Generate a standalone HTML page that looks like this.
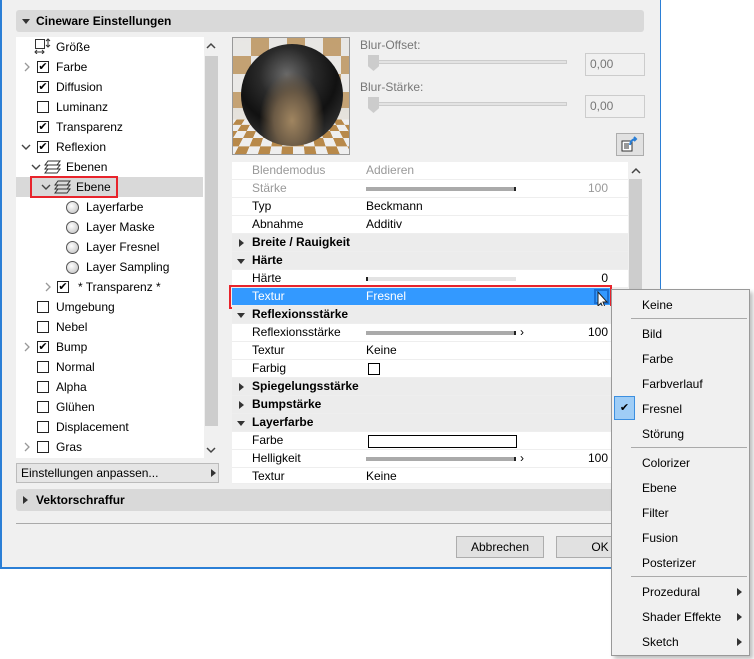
<!DOCTYPE html>
<html><head><style>
*{margin:0;padding:0;box-sizing:border-box}
body{width:754px;height:659px;background:#fff;font-family:"Liberation Sans",sans-serif;font-size:12px;color:#000;position:relative;overflow:hidden}
.a{position:absolute}
.dlg{left:0;top:0;width:661px;height:569px;background:#f0f0f0;border-left:2px solid #2b7fd6;border-right:1px solid #2b7fd6;border-bottom:2px solid #2b7fd6}
.hdr{background:#d9d9d9;border-radius:3px;font-weight:bold}
.tri{display:inline-block;width:0;height:0;border-left:4px solid transparent;border-right:4px solid transparent;border-top:5px solid #333}
.trr{display:inline-block;width:0;height:0;border-top:4px solid transparent;border-bottom:4px solid transparent;border-left:5px solid #333}
.row{position:absolute;height:20px;line-height:20px}
.cb{position:absolute;width:12px;height:12px;border:1px solid #222;background:#fff;top:4px;font-size:11px;line-height:10px;text-align:center}
.rad{position:absolute;width:13px;height:13px;border-radius:50%;border:1px solid #555;background:radial-gradient(circle at 40% 35%,#fff,#bbb);top:4px}
.pr{position:absolute;left:232px;width:396px;height:18px;line-height:17px;background:#fff;border-bottom:1px solid #eee}
.pr .l{position:absolute;left:20px}
.pr .v{position:absolute;left:134px}
.pg{background:#ececec;font-weight:bold}
.bar{position:absolute;left:134px;top:7px;width:150px;height:4px;background:#aaa;border-right:2px solid #222}
.num{position:absolute;right:20px}
.mi{position:absolute;left:642px;height:20px;line-height:20px}
.sep{position:absolute;left:631px;width:116px;height:1px;background:#aaa}
.btn{background:#e1e1e1;border:1px solid #adadad;text-align:center;line-height:20px}
svg.c{position:absolute}
</style></head><body>
<div class="a dlg"></div>
<div class="a hdr" style="left:16px;top:10px;width:628px;height:22px;line-height:22px;padding-left:20px"><span class="tri a" style="left:6px;top:9px"></span>Cineware Einstellungen</div>
<!-- left tree -->
<div class="a" style="left:16px;top:37px;width:188px;height:421px;background:#fff"></div>
<div class="a" style="left:204px;top:37px;width:15px;height:421px;background:#f0f0f0"></div>
<div class="a" style="left:205px;top:56px;width:13px;height:370px;background:#cdcdcd"></div>
<svg class="c" style="left:206px;top:42px" width="10" height="8"><path d="M1 6l4-4 4 4" stroke="#444" stroke-width="1.5" fill="none"/></svg>
<svg class="c" style="left:206px;top:446px" width="10" height="8"><path d="M1 2l4 4 4-4" stroke="#444" stroke-width="1.5" fill="none"/></svg>
<div class="a" style="left:16px;top:177px;width:187px;height:20px;background:#d9d9d9"></div>
<div class="a" style="left:30px;top:176px;width:88px;height:22px;border:2px solid #e8242c"></div>
<div class="row" style="top:37px;left:56px">Größe</div>
<svg class="c" style="left:34px;top:38px" width="18" height="16"><rect x="1.5" y="1.5" width="9" height="9" fill="none" stroke="#333"/><path d="M14 1v8M12 3l2-2 2 2M12 7l2 2 2-2M1 14h9M3 12l-2 2 2 2M8 12l2 2-2 2" stroke="#333" fill="none"/></svg>
<svg class="c" style="left:23px;top:62px" width="8" height="10"><path d="M2 1l4 4-4 4" stroke="#999" stroke-width="1.3" fill="none"/></svg>
<div class="cb" style="left:37px;top:61px">&#10004;</div><div class="row" style="top:57px;left:56px">Farbe</div>
<div class="cb" style="left:37px;top:81px">&#10004;</div><div class="row" style="top:77px;left:56px">Diffusion</div>
<div class="cb" style="left:37px;top:101px"></div><div class="row" style="top:97px;left:56px">Luminanz</div>
<div class="cb" style="left:37px;top:121px">&#10004;</div><div class="row" style="top:117px;left:56px">Transparenz</div>
<svg class="c" style="left:21px;top:143px" width="10" height="8"><path d="M1 2l4 4 4-4" stroke="#444" stroke-width="1.4" fill="none"/></svg>
<div class="cb" style="left:37px;top:141px">&#10004;</div><div class="row" style="top:137px;left:56px">Reflexion</div>
<svg class="c" style="left:31px;top:163px" width="10" height="8"><path d="M1 2l4 4 4-4" stroke="#444" stroke-width="1.4" fill="none"/></svg>
<svg class="c" style="left:44px;top:159px" width="18" height="16"><path d="M4 2h12l-3 4H1zM4 6h12l-3 4H1zM4 10h12l-3 4H1z" stroke="#333" fill="#fff"/></svg>
<div class="row" style="top:157px;left:66px">Ebenen</div>
<svg class="c" style="left:41px;top:183px" width="10" height="8"><path d="M1 2l4 4 4-4" stroke="#444" stroke-width="1.4" fill="none"/></svg>
<svg class="c" style="left:54px;top:179px" width="18" height="16"><path d="M4 2h12l-3 4H1zM4 6h12l-3 4H1zM4 10h12l-3 4H1z" stroke="#333" fill="#d9d9d9"/></svg>
<div class="row" style="top:177px;left:76px">Ebene</div>
<div class="rad" style="left:66px;top:201px"></div><div class="row" style="top:197px;left:86px">Layerfarbe</div>
<div class="rad" style="left:66px;top:221px"></div><div class="row" style="top:217px;left:86px">Layer Maske</div>
<div class="rad" style="left:66px;top:241px"></div><div class="row" style="top:237px;left:86px">Layer Fresnel</div>
<div class="rad" style="left:66px;top:261px"></div><div class="row" style="top:257px;left:86px">Layer Sampling</div>
<svg class="c" style="left:44px;top:282px" width="8" height="10"><path d="M2 1l4 4-4 4" stroke="#999" stroke-width="1.3" fill="none"/></svg>
<div class="cb" style="left:57px;top:281px">&#10004;</div><div class="row" style="top:277px;left:78px">* Transparenz *</div>
<div class="cb" style="left:37px;top:301px"></div><div class="row" style="top:297px;left:56px">Umgebung</div>
<div class="cb" style="left:37px;top:321px"></div><div class="row" style="top:317px;left:56px">Nebel</div>
<svg class="c" style="left:23px;top:342px" width="8" height="10"><path d="M2 1l4 4-4 4" stroke="#999" stroke-width="1.3" fill="none"/></svg>
<div class="cb" style="left:37px;top:341px">&#10004;</div><div class="row" style="top:337px;left:56px">Bump</div>
<div class="cb" style="left:37px;top:361px"></div><div class="row" style="top:357px;left:56px">Normal</div>
<div class="cb" style="left:37px;top:381px"></div><div class="row" style="top:377px;left:56px">Alpha</div>
<div class="cb" style="left:37px;top:401px"></div><div class="row" style="top:397px;left:56px">Glühen</div>
<div class="cb" style="left:37px;top:421px"></div><div class="row" style="top:417px;left:56px">Displacement</div>
<svg class="c" style="left:23px;top:442px" width="8" height="10"><path d="M2 1l4 4-4 4" stroke="#999" stroke-width="1.3" fill="none"/></svg>
<div class="cb" style="left:37px;top:441px"></div><div class="row" style="top:437px;left:56px">Gras</div>
<div class="a" style="left:16px;top:463px;width:203px;height:20px;background:#e5e5e5;border:1px solid #bbb;line-height:18px;padding-left:4px">Einstellungen anpassen...<span class="trr a" style="left:194px;top:5px"></span></div>
<!-- preview -->
<div class="a" style="left:232px;top:37px;width:118px;height:118px;border:1px solid #999;overflow:hidden;background:linear-gradient(#d8d4cc,#ece9e4)">
<div class="a" style="left:-40px;top:70px;width:200px;height:60px;background:repeating-conic-gradient(#b8894a 0 25%,#eee 0 50%) 0 0/20px 20px;transform:perspective(80px) rotateX(40deg)"></div>
<div class="a" style="left:0;top:0;width:118px;height:70px;background:repeating-conic-gradient(#b8894a 0 25%,#eee 0 50%) 0 0/36px 36px;opacity:.7"></div>
<div class="a" style="left:8px;top:6px;width:102px;height:102px;border-radius:50%;background:radial-gradient(ellipse at 50% 75%,#a08560 0,#6b5a45 25%,transparent 45%),radial-gradient(circle at 45% 30%,#6a6a6a 0,#2a2a2a 30%,#111 55%,#333 80%,#999 100%)"></div>
</div>
<div class="a" style="left:360px;top:38px;color:#777">Blur-Offset:</div>
<div class="a" style="left:368px;top:60px;width:199px;height:4px;background:#e3e3e3;border:1px solid #ccc"></div>
<div class="a" style="left:368px;top:55px;width:11px;height:16px;background:#ccc;clip-path:polygon(0 0,100% 0,100% 70%,50% 100%,0 70%)"></div>
<div class="a" style="left:585px;top:53px;width:60px;height:23px;border:1px solid #ccc;background:#f0f0f0;color:#777;line-height:21px;padding-left:4px">0,00</div>
<div class="a" style="left:360px;top:80px;color:#777">Blur-Stärke:</div>
<div class="a" style="left:368px;top:102px;width:199px;height:4px;background:#e3e3e3;border:1px solid #ccc"></div>
<div class="a" style="left:368px;top:97px;width:11px;height:16px;background:#ccc;clip-path:polygon(0 0,100% 0,100% 70%,50% 100%,0 70%)"></div>
<div class="a" style="left:585px;top:95px;width:60px;height:23px;border:1px solid #ccc;background:#f0f0f0;color:#777;line-height:21px;padding-left:4px">0,00</div>
<div class="a" style="left:616px;top:133px;width:28px;height:23px;background:#e1e1e1;border:1px solid #adadad"></div>
<svg class="a" style="left:620px;top:136px" width="20" height="17"><rect x="2" y="5" width="10" height="10" fill="#fff" stroke="#333"/><path d="M4 8h5M4 10h5M4 12h5" stroke="#333"/><path d="M10 9q1-6 6-6M14 1l2 2-2 2" stroke="#2b7fd6" stroke-width="2" fill="none"/></svg>
<!-- props -->
<div class="a" style="left:628px;top:162px;width:15px;height:322px;background:#f0f0f0"></div>
<div class="a" style="left:629px;top:179px;width:13px;height:305px;background:#cdcdcd"></div>
<svg class="c" style="left:631px;top:167px" width="10" height="8"><path d="M1 6l4-4 4 4" stroke="#444" stroke-width="1.5" fill="none"/></svg>
<div class="pr" style="top:162px;color:#999"><span class="l">Blendemodus</span><span class="v">Addieren</span></div>
<div class="pr" style="top:180px;color:#999"><span class="l">Stärke</span><div class="bar"></div><span class="num">100</span></div>
<div class="pr" style="top:198px"><span class="l">Typ</span><span class="v">Beckmann</span></div>
<div class="pr" style="top:216px"><span class="l">Abnahme</span><span class="v">Additiv</span></div>
<div class="pr pg" style="top:234px"><span class="trr a" style="left:7px;top:5px"></span><span class="l">Breite / Rauigkeit</span></div>
<div class="pr pg" style="top:252px"><span class="tri a" style="left:5px;top:7px"></span><span class="l">Härte</span></div>
<div class="pr" style="top:270px"><span class="l">Härte</span><div class="bar" style="background:#e3e3e3;border:0;border-left:2px solid #222"></div><span class="num">0</span></div>
<div class="pr" style="top:288px;height:18px;background:#3399ff;color:#fff;width:380px"><span class="l">Textur</span><span class="v">Fresnel</span><div class="a" style="left:362px;top:1px;width:15px;height:15px;border:2px solid #1a6fd1;background:#3399ff"></div></div>
<div class="a" style="left:229px;top:285px;width:383px;height:24px;border:2px solid #e8242c"></div>
<svg class="c" style="left:597px;top:291px" width="14" height="20"><path d="M3 5l5 4-5 4z" fill="#222"/><path d="M1 1v14l3-3 2 5 2-1-2-5h4z" fill="#fff" stroke="#222"/></svg>
<div class="pr pg" style="top:306px;width:380px"><span class="tri a" style="left:5px;top:7px"></span><span class="l">Reflexionsstärke</span></div>
<div class="pr" style="top:324px;width:380px"><span class="l">Reflexionsstärke</span><div class="bar"></div><span class="a" style="left:288px">&#8250;</span><span class="num" style="right:4px">100</span></div>
<div class="pr" style="top:342px;width:380px"><span class="l">Textur</span><span class="v">Keine</span></div>
<div class="pr" style="top:360px;width:380px"><span class="l">Farbig</span><div class="a" style="left:136px;top:3px;width:12px;height:12px;border:1px solid #000"></div></div>
<div class="pr pg" style="top:378px;width:380px"><span class="trr a" style="left:7px;top:5px"></span><span class="l">Spiegelungsstärke</span></div>
<div class="pr pg" style="top:396px;width:380px"><span class="trr a" style="left:7px;top:5px"></span><span class="l">Bumpstärke</span></div>
<div class="pr pg" style="top:414px;width:380px"><span class="tri a" style="left:5px;top:7px"></span><span class="l">Layerfarbe</span></div>
<div class="pr" style="top:432px;width:380px"><span class="l">Farbe</span><div class="a" style="left:136px;top:3px;width:149px;height:13px;border:1px solid #000"></div></div>
<div class="pr" style="top:450px;width:380px"><span class="l">Helligkeit</span><div class="bar"></div><span class="a" style="left:288px">&#8250;</span><span class="num" style="right:4px">100</span></div>
<div class="pr" style="top:468px;width:380px;height:16px"><span class="l">Textur</span><span class="v">Keine</span></div>
<div class="a hdr" style="left:16px;top:489px;width:628px;height:22px;line-height:22px;padding-left:20px"><span class="trr a" style="left:7px;top:7px"></span>Vektorschraffur</div>
<div class="a" style="left:16px;top:523px;width:628px;height:1px;background:#aaa"></div>
<div class="a btn" style="left:456px;top:536px;width:88px;height:22px">Abbrechen</div>
<div class="a btn" style="left:556px;top:536px;width:88px;height:22px">OK</div>
<!-- menu -->
<div class="a" style="left:611px;top:289px;width:139px;height:367px;background:#f0f0f0;border:1px solid #999;box-shadow:3px 3px 4px rgba(0,0,0,.25)"></div>
<div class="mi" style="top:295px">Keine</div>
<div class="sep" style="top:318px"></div>
<div class="mi" style="top:324px">Bild</div>
<div class="mi" style="top:349px">Farbe</div>
<div class="mi" style="top:374px">Farbverlauf</div>
<div class="a" style="left:614px;top:396px;width:21px;height:24px;background:#9fcdf6;border:1px solid #3c8fe0;text-align:center;line-height:22px;font-size:11px">&#10004;</div>
<div class="mi" style="top:399px">Fresnel</div>
<div class="mi" style="top:424px">Störung</div>
<div class="sep" style="top:447px"></div>
<div class="mi" style="top:453px">Colorizer</div>
<div class="mi" style="top:478px">Ebene</div>
<div class="mi" style="top:503px">Filter</div>
<div class="mi" style="top:528px">Fusion</div>
<div class="mi" style="top:553px">Posterizer</div>
<div class="sep" style="top:576px"></div>
<div class="mi" style="top:582px">Prozedural</div><span class="trr a" style="left:737px;top:588px"></span>
<div class="mi" style="top:607px">Shader Effekte</div><span class="trr a" style="left:737px;top:613px"></span>
<div class="mi" style="top:632px">Sketch</div><span class="trr a" style="left:737px;top:638px"></span>
</body></html>
